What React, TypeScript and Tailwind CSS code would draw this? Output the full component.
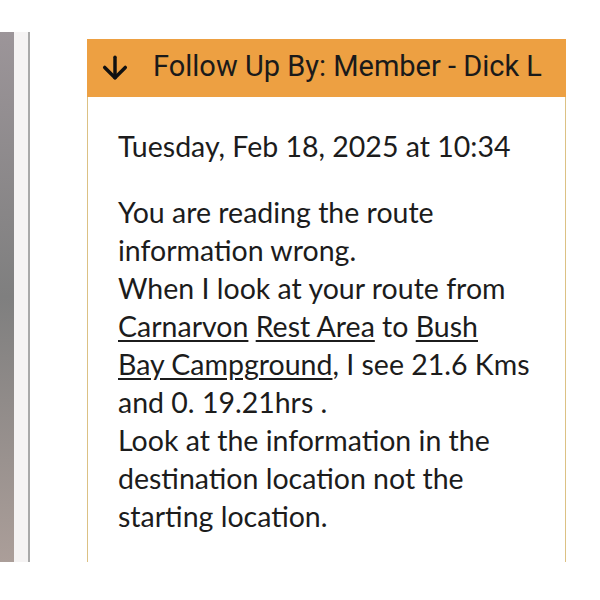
export default function App() {
  return (
    <div className="w-[600px] h-[600px] bg-white flex flex-col">
      <div className="h-[32px]" />
      <div className="flex h-[530px] overflow-hidden">
        {/* left edge of the screen behind */}
        <div className="w-[14px] bg-gradient-to-b from-[#9c9599] via-[#7f7f7f] to-[#ab9e99]" />
        <div className="w-[14px] bg-[#f5f3f3]" />
        <div className="w-[2px] bg-[#a9a9a9]" />
        <div className="w-[57px]" />

        <div className="w-[479px] flex flex-col">
          <div className="h-[7px]" />
          <div className="h-[58px] bg-[#eda042] flex items-center pl-[15px] gap-[25px] font-['Roboto',sans-serif] text-[29px] text-[#1a1a1a]">
            <svg width="26" height="26" viewBox="0 0 24 24" fill="none" stroke="#111" strokeWidth="3.2" strokeLinecap="round" strokeLinejoin="round">
              <path d="M12 2v19" />
              <path d="M2.5 11.5l9.5 9.5 9.5-9.5" />
            </svg>
            <span className="-mt-[3px]">Follow Up By: Member - Dick L</span>
          </div>
          <div className="flex-1 border-x border-[#dcc184] pl-[30px] pr-[20px] pt-[30px] font-['Lato',sans-serif] text-[28.5px] leading-[38px] text-[#1c1c1c]">
            <p>Tuesday, Feb 18, 2025 at 10:34</p>
            <p className="mt-[28px]">
              You are reading the route
              <br />
              information wrong.
              <br />
              When I look at your route from
              <br />
              <span className="underline underline-offset-[3px]">Carnarvon</span>{" "}
              <span className="underline underline-offset-[3px]">Rest Area</span> to{" "}
              <span className="underline underline-offset-[3px]">Bush</span>
              <br />
              <span className="underline underline-offset-[3px]">Bay Campground</span>, I see 21.6 Kms
              <br />
              and 0. 19.21hrs .
              <br />
              Look at the information in the
              <br />
              destination location not the
              <br />
              starting location.
            </p>
          </div>
        </div>
      </div>
    </div>
  );
}
